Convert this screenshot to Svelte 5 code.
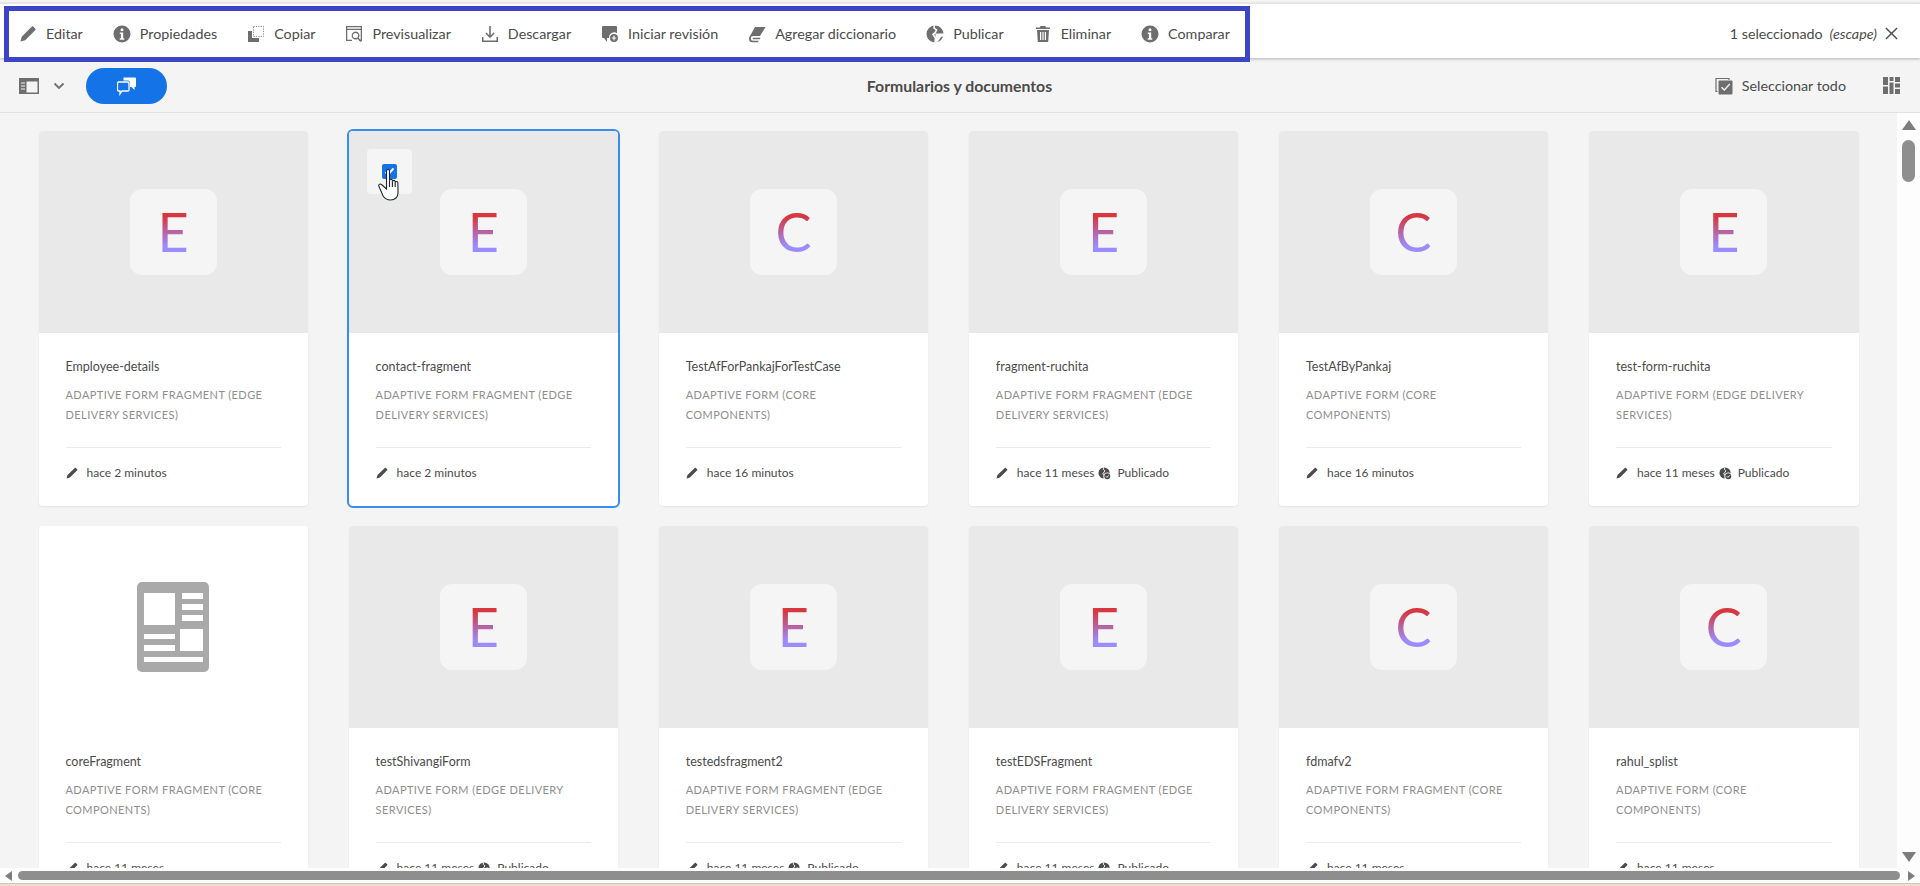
<script lang="ts">
	const actions = [
		{ label: 'Editar', icon: 'edit' },
		{ label: 'Propiedades', icon: 'info' },
		{ label: 'Copiar', icon: 'copy' },
		{ label: 'Previsualizar', icon: 'preview' },
		{ label: 'Descargar', icon: 'download' },
		{ label: 'Iniciar revisión', icon: 'review' },
		{ label: 'Agregar diccionario', icon: 'book' },
		{ label: 'Publicar', icon: 'globe' },
		{ label: 'Eliminar', icon: 'trash' },
		{ label: 'Comparar', icon: 'info' }
	];

	const EDS_FRAGMENT = 'Adaptive Form Fragment (Edge Delivery Services)';
	const EDS_FORM = 'Adaptive Form (Edge Delivery Services)';
	const CORE_FRAGMENT = 'Adaptive Form Fragment (Core Components)';
	const CORE_FORM = 'Adaptive Form (Core Components)';

	const cards = [
		{ name: 'Employee-details', type: EDS_FRAGMENT, letter: 'E', time: 'hace 2 minutos' },
		{ name: 'contact-fragment', type: EDS_FRAGMENT, letter: 'E', time: 'hace 2 minutos', selected: true },
		{ name: 'TestAfForPankajForTestCase', type: CORE_FORM, letter: 'C', time: 'hace 16 minutos' },
		{ name: 'fragment-ruchita', type: EDS_FRAGMENT, letter: 'E', time: 'hace 11 meses', published: true },
		{ name: 'TestAfByPankaj', type: CORE_FORM, letter: 'C', time: 'hace 16 minutos' },
		{ name: 'test-form-ruchita', type: EDS_FORM, letter: 'E', time: 'hace 11 meses', published: true },
		{ name: 'coreFragment', type: CORE_FRAGMENT, letter: '', time: 'hace 11 meses' },
		{ name: 'testShivangiForm', type: EDS_FORM, letter: 'E', time: 'hace 11 meses', published: true },
		{ name: 'testedsfragment2', type: EDS_FRAGMENT, letter: 'E', time: 'hace 11 meses', published: true },
		{ name: 'testEDSFragment', type: EDS_FRAGMENT, letter: 'E', time: 'hace 11 meses', published: true },
		{ name: 'fdmafv2', type: CORE_FRAGMENT, letter: 'C', time: 'hace 11 meses' },
		{ name: 'rahul_splist', type: CORE_FORM, letter: 'C', time: 'hace 11 meses' }
	];
</script>

{#snippet toolIcon(name)}
	<svg class="tool-icon" viewBox="0 0 18 18" aria-hidden="true">
		{#if name === 'edit'}
			<path d="M1.5 16.5l1.2-4.7L12.9 1.6c.4-.4 1-.4 1.4 0l2.1 2.1c.4.4.4 1 0 1.4L6.2 15.300z" />
		{:else if name === 'info'}
			<path fill-rule="evenodd" d="M9 .5a8.500 8.500 0 1 0 0 17 8.500 8.500 0 0 0 0-17zM9 3.200a1.500 1.500 0 1 1 0 3 1.500 1.500 0 0 1 0-3zM6.800 7.500h3.400v5.800h1.100v1.500H6.700v-1.500h1.200V9H6.800z" />
		{:else if name === 'copy'}
			<path d="M1 6h4v7h7v4H1z" />
			<path class="dots" d="M6.500 1.500h10v10h-10z" />
		{:else if name === 'preview'}
			<path fill-rule="evenodd" d="M1 1h16v15h-3v-1.300h1.700V5H2.300v9.700H7V16H1zM2.300 2.300v1.400h13.400V2.300z" />
			<path fill-rule="evenodd" d="M10.500 6.500a4 4 0 0 1 3.200 6.400l3 3-1 1-3-3a4 4 0 1 1-2.200-7.400zm0 1.400a2.600 2.600 0 1 0 0 5.200 2.600 2.600 0 0 0 0-5.200z" />
		{:else if name === 'download'}
			<path d="M8.200 1h1.600v9.200l2.700-2.700 1.100 1.100L9 13.200 4.400 8.600l1.100-1.100 2.700 2.700z" />
			<path d="M1 12h1.500v3.500h13V12H17v5H1z" />
		{:else if name === 'review'}
			<path d="M2 1h13a1 1 0 0 1 1 1v6.200a5 5 0 0 0-7.800 4.800H6v4l-3-4H2a1 1 0 0 1-1-1V2a1 1 0 0 1 1-1z" />
			<path fill-rule="evenodd" d="M13 9a4 4 0 1 1 0 8 4 4 0 0 1 0-8zm-.6 1.800v1.600h-1.600v1.200h1.600v1.600h1.200v-1.600h1.600v-1.200h-1.600v-1.600z" />
		{:else if name === 'book'}
			<path fill-rule="evenodd" d="M7 2h10.500l-5.500 9H5.200a2.400 2.400 0 0 0 0 4.800h5.600l-.9 1.400H4.500A3.500 3.500 0 0 1 1 13.700c0-1 .3-1.700.8-2.500z" />
			<path d="M5.300 12.800h7.200l-.6 1.400H5.300a.7.7 0 0 1 0-1.400z" />
		{:else if name === 'globe'}
			<circle cx="9" cy="9" r="8.500" />
			<path class="globe-gap" d="M8.500 0l-.5 3 2.500 2-1.500 3-2 1.500L9.500 13l-.5 5" />
			<path fill="#fff" d="M9.500 8.500H18v3l-3 .5-2 3-2.500 3-1-5z" />
		{:else if name === 'trash'}
			<path fill-rule="evenodd" d="M6.500 1h5l.5 1.500h4V4H2V2.500h4zM3 5h12l-.8 12H3.800zM6 7v8h1.200V7zm2.400 0v8h1.200V7zm2.400 0v8H12V7z" />
		{/if}
	</svg>
{/snippet}

{#snippet pencil()}
	<svg class="meta-icon" viewBox="0 0 12 12" aria-hidden="true">
		<path d="M.5 11.500l1-3.400L8.800.9c.3-.3.700-.3 1 0l1.400 1.400c.3.300.3.700 0 1L3.900 10.500z" />
	</svg>
{/snippet}

{#snippet globeCheck()}
	<svg class="meta-icon globe-check" viewBox="0 0 14 14" aria-hidden="true">
		<circle cx="6.500" cy="6.500" r="6" />
		<path class="tick" d="M6 .5l-.3 2 1.700 1.500-1 2-1.400 1 1.700 2.500-.3 3" />
		<circle cx="10" cy="10" r="4" fill="#fff" />
		<circle cx="10" cy="10" r="3.200" />
		<path class="tick" d="M8.400 10l1.200 1.200 2-2.200" />
	</svg>
{/snippet}

<div class="page">
	<header class="selection-bar">
		<nav class="actions">
			{#each actions as action}
				<span class="action">
					{@render toolIcon(action.icon)}
					<span>{action.label}</span>
				</span>
			{/each}
		</nav>
		<div class="selection-count">
			<span>1 seleccionado</span>
			<em>(escape)</em>
			<svg class="close" viewBox="0 0 14 14" aria-hidden="true">
				<path d="M1 1l12 12M13 1L1 13" />
			</svg>
		</div>
	</header>

	<div class="action-bar">
		<div class="bar-left">
			<svg class="rail-icon" viewBox="0 0 20 16" aria-hidden="true">
				<path fill-rule="evenodd" d="M0 0h20v16H0zM7.500 3.500V14.500H18.500V3.500z" />
				<path class="rail-gap" d="M2 5h4M2 8h4M2 11h4" />
			</svg>
			<svg class="chevron" viewBox="0 0 12 8" aria-hidden="true">
				<path d="M1.500 1.500L6 6l4.500-4.500" />
			</svg>
			<button class="pill" aria-label="Comentarios">
				<svg viewBox="0 0 20 20" aria-hidden="true">
					<path fill="#fff" d="M6.500 1.500H18a1 1 0 0 1 1 1V10a1 1 0 0 1-1 1h-.5v3l-3-3H13V6.500a2 2 0 0 0-2-2H6.500z" />
					<path fill="#1473e6" stroke="#fff" stroke-width="1.300" d="M1.500 6h9.500a1 1 0 0 1 1 1v7a1 1 0 0 1-1 1H5l-2 3v-3H1.500a1 1 0 0 1-1-1V7a1 1 0 0 1 1-1z" />
				</svg>
			</button>
		</div>
		<h1>Formularios y documentos</h1>
		<div class="bar-right">
			<span class="select-all">
				<svg viewBox="0 0 18 18" aria-hidden="true">
					<path fill="none" stroke="#6e6e6e" stroke-width="1.200" d="M2.500 14.500H1V1.500h13V3" />
					<path fill="#6e6e6e" fill-rule="evenodd" d="M4.500 3.500h12a1 1 0 0 1 1 1v12a1 1 0 0 1-1 1h-12a1 1 0 0 1-1-1v-12a1 1 0 0 1 1-1zM7 9.800l-1 1 3.300 3.200 6-6.500-1-1-5 5.400z" />
				</svg>
				<span>Seleccionar todo</span>
			</span>
			<svg class="view-icon" viewBox="0 0 17 17" aria-hidden="true">
				<path d="M0 0h5v8H0zM0 9.500h5V17H0zM6.500 0h4v4h-4zM6.500 5.500h4v11.500h-4zM12 0h5v5h-5zM12 6.500h5v4h-5zM12 12h5v5h-5z" />
			</svg>
		</div>
	</div>

	<div class="workspace">
		<main class="grid">
			{#each cards as card}
				<article class="card" class:selected={card.selected} class:plain={!card.letter}>
					<div class="thumb">
						{#if card.letter}
							<div class="tile"><span class="letter">{card.letter}</span></div>
						{:else}
							<svg class="doc-icon" viewBox="0 0 72 90" aria-hidden="true">
								<path fill="#a9a9a9" fill-rule="evenodd" d="M5 0h62a5 5 0 0 1 5 5v80a5 5 0 0 1-5 5H5a5 5 0 0 1-5-5V5a5 5 0 0 1 5-5zM7 11v32h31V11zM45 11v6h21v-6zM45 22v6h21v-6zM45 33v6h21v-6zM7 52v5h31v-5zM7 63v6h31v-6zM43 47v22h23V47zM7 75v5h59v-5z" />
							</svg>
						{/if}
						{#if card.selected}
							<div class="check-wrap">
								<span class="check">
									<svg viewBox="0 0 15 15" aria-hidden="true"><path d="M3.500 8l2.500 2.500 5.500-6" /></svg>
								</span>
							</div>
							<svg class="hand" viewBox="0 0 26 33" aria-hidden="true">
								<path d="M8.500 2.200c0-2.200 3-2.200 3 0v9.500c0-2 2.900-2 2.900 0v1c0-1.800 2.800-1.800 2.800 0v1c0-1.700 2.700-1.700 2.700 0 0 0 .1 7.500.1 10.300 0 4-3 7-7.500 7-4.200 0-6-1.700-7.500-4.200L1 17.500c-1-1.700 1-3.200 2.500-2L8.500 20z" />
								<path d="M11.500 11.500V18M14.400 12.500V18M17.200 13.500V18" />
							</svg>
						{/if}
					</div>
					<div class="body">
						<div class="name">{card.name}</div>
						<div class="type">{card.type}</div>
						<div class="meta">
							{@render pencil()}
							<span>{card.time}</span>
							{#if card.published}
								{@render globeCheck()}
								<span>Publicado</span>
							{/if}
						</div>
					</div>
				</article>
			{/each}
		</main>
		<aside class="v-scroll">
			<span class="arrow up"></span>
			<span class="v-thumb"></span>
			<span class="arrow down"></span>
		</aside>
	</div>

	<div class="h-scroll">
		<span class="arrow left"></span>
		<span class="h-thumb"></span>
		<span class="arrow right"></span>
	</div>
	<div class="desk-edge"></div>

	<div class="annotation"></div>
</div>

<style>
	:global(body) {
		margin: 0;
		overflow: hidden;
		background: #f4f4f4;
	}

	.page {
		position: relative;
		display: flex;
		flex-direction: column;
		height: 886px;
		overflow: hidden;
		font-family: Lato, 'Open Sans', sans-serif;
		color: #4b4b4b;
	}

	.selection-bar {
		position: relative;
		z-index: 2;
		flex: none;
		box-sizing: border-box;
		display: flex;
		align-items: center;
		justify-content: space-between;
		height: 55px;
		margin-top: 3px;
		padding: 5px 22px 0 19px;
		background: #fff;
		border-top: 1px solid #e2e2e2;
		box-shadow: 0 1px 3px rgba(0, 0, 0, 0.28);
	}

	.actions {
		display: flex;
		align-items: center;
		gap: 30px;
	}

	.action {
		display: flex;
		align-items: center;
		gap: 9px;
		font-size: 14.3px;
		white-space: nowrap;
	}

	.tool-icon {
		width: 18px;
		height: 18px;
		fill: #6e6e6e;
	}

	.tool-icon .dots {
		fill: none;
		stroke: #8a8a8a;
		stroke-width: 1;
		stroke-dasharray: 1.200 1.200;
	}

	.globe-gap {
		fill: none;
		stroke: #fff;
		stroke-width: 1.600;
	}

	.selection-count {
		display: flex;
		align-items: center;
		font-size: 14.3px;
		white-space: nowrap;
	}

	.selection-count em {
		margin-left: 7px;
	}

	.close {
		width: 13px;
		height: 13px;
		margin-left: 8px;
		fill: none;
		stroke: #4b4b4b;
		stroke-width: 1.500;
	}

	.action-bar {
		flex: none;
		box-sizing: border-box;
		display: grid;
		grid-template-columns: 1fr auto 1fr;
		align-items: center;
		height: 55px;
		padding: 1px 20px 0 19px;
		background: #f4f4f4;
		border-bottom: 1px solid #e1e1e1;
	}

	.action-bar h1 {
		margin: 0;
		font-size: 15.8px;
		font-weight: 700;
		color: #4b4b4b;
	}

	.bar-left {
		display: flex;
		align-items: center;
	}

	.rail-icon {
		width: 20px;
		height: 16px;
		fill: #6e6e6e;
	}

	.rail-gap {
		fill: none;
		stroke: #f4f4f4;
		stroke-width: 1;
	}

	.chevron {
		width: 12px;
		height: 8px;
		margin-left: 14px;
		fill: none;
		stroke: #6e6e6e;
		stroke-width: 1.800;
	}

	.pill {
		display: flex;
		align-items: center;
		justify-content: center;
		width: 81px;
		height: 36px;
		margin-left: 21px;
		padding: 0;
		border: 0;
		border-radius: 18px;
		background: #1473e6;
	}

	.pill svg {
		width: 20px;
		height: 20px;
	}

	.bar-right {
		display: flex;
		align-items: center;
		justify-content: flex-end;
		gap: 37px;
	}

	.select-all {
		display: flex;
		align-items: center;
		gap: 9px;
		font-size: 14.3px;
	}

	.select-all svg {
		width: 18px;
		height: 18px;
	}

	.view-icon {
		width: 17px;
		height: 17px;
		fill: #6e6e6e;
	}

	.workspace {
		flex: 1;
		display: flex;
		min-height: 0;
	}

	.grid {
		flex: 1;
		box-sizing: border-box;
		display: grid;
		grid-template-columns: repeat(6, 1fr);
		grid-auto-rows: 375px;
		gap: 20px 40.7px;
		padding: 18px 38.5px 0;
		overflow: hidden;
		min-width: 0;
	}

	.card {
		display: flex;
		flex-direction: column;
		background: #fff;
		border-radius: 4px;
		box-shadow: 0 1px 2px rgba(0, 0, 0, 0.07);
	}

	.card.selected {
		outline: 2px solid #378ef0;
	}

	.thumb {
		position: relative;
		flex: none;
		display: flex;
		align-items: center;
		justify-content: center;
		height: 202px;
		background: #e9e9e9;
		border-radius: 4px 4px 0 0;
	}

	.plain .thumb {
		background: #fff;
	}

	.tile {
		display: flex;
		align-items: center;
		justify-content: center;
		width: 87px;
		height: 86px;
		background: #f5f5f5;
		border-radius: 12px;
	}

	.letter {
		font-family: Lato, sans-serif;
		font-size: 54px;
		font-weight: 400;
		line-height: 1;
		background: linear-gradient(180deg, #d7373f 22%, #9a8cff 76%);
		-webkit-background-clip: text;
		background-clip: text;
		color: transparent;
	}

	.doc-icon {
		width: 72px;
		height: 90px;
	}

	.check-wrap {
		position: absolute;
		top: 18px;
		left: 18px;
		display: flex;
		align-items: center;
		justify-content: center;
		width: 45px;
		height: 45px;
		background: #f5f5f5;
		border-radius: 4px;
	}

	.check {
		display: block;
		width: 15px;
		height: 15px;
		background: #1473e6;
		border-radius: 2px;
	}

	.check svg {
		display: block;
		fill: none;
		stroke: #fff;
		stroke-width: 2;
	}

	.hand {
		position: absolute;
		top: 38px;
		left: 29px;
		width: 26px;
		height: 33px;
		fill: #fff;
		stroke: #1f2430;
		stroke-width: 1.100;
	}

	.body {
		flex: 1;
		padding: 25px 27px 0;
	}

	.name {
		font-size: 12.5px;
		line-height: 18px;
		color: #4b4b4b;
	}

	.type {
		margin-top: 9px;
		padding-bottom: 22px;
		border-bottom: 1px solid #eaeaea;
		height: 40px;
		font-size: 11px;
		line-height: 20px;
		letter-spacing: 0.42px;
		text-transform: uppercase;
		color: #8e8e8e;
	}

	.meta {
		display: flex;
		align-items: center;
		margin-top: 16px;
		font-size: 12px;
		line-height: 18px;
	}

	.meta-icon {
		width: 12px;
		height: 12px;
		margin-right: 9px;
		fill: #4b4b4b;
	}

	.globe-check {
		width: 13px;
		height: 13px;
		margin-left: 4px;
		margin-right: 6px;
	}

	.tick {
		fill: none;
		stroke: #fff;
		stroke-width: 1;
	}

	.v-scroll {
		flex: none;
		display: flex;
		flex-direction: column;
		align-items: center;
		width: 23px;
		padding: 7px 0 6px;
		box-sizing: border-box;
		background: #fdfdfd;
	}

	.v-thumb {
		width: 13px;
		height: 42px;
		margin-top: 10px;
		background: #8e8e8e;
		border-radius: 7px;
	}

	.arrow {
		width: 0;
		height: 0;
		border-style: solid;
		border-color: transparent;
	}

	.arrow.up {
		border-width: 0 7px 10px;
		border-bottom-color: #7d7d7d;
	}

	.arrow.down {
		margin-top: auto;
		border-width: 10px 7px 0;
		border-top-color: #7d7d7d;
	}

	.h-scroll {
		flex: none;
		box-sizing: border-box;
		display: flex;
		align-items: center;
		height: 15px;
		padding: 3px 5px 3px 5px;
		background: #fdfdfd;
	}

	.h-thumb {
		flex: 1;
		height: 9px;
		margin: 0 8px 0 6px;
		background: #8e8e8e;
		border-radius: 5px;
	}

	.arrow.left {
		border-width: 5px 7px 5px 0;
		border-right-color: #7d7d7d;
	}

	.arrow.right {
		border-width: 5px 0 5px 7px;
		border-left-color: #7d7d7d;
	}

	.desk-edge {
		flex: none;
		height: 3px;
		background: #efdccd;
		border-top: 1px solid #c9c7c2;
		box-sizing: border-box;
	}

	.annotation {
		position: absolute;
		top: 6px;
		left: 4px;
		z-index: 3;
		box-sizing: border-box;
		width: 1246px;
		height: 56px;
		border: 5px solid #3d45c7;
		pointer-events: none;
	}
</style>
